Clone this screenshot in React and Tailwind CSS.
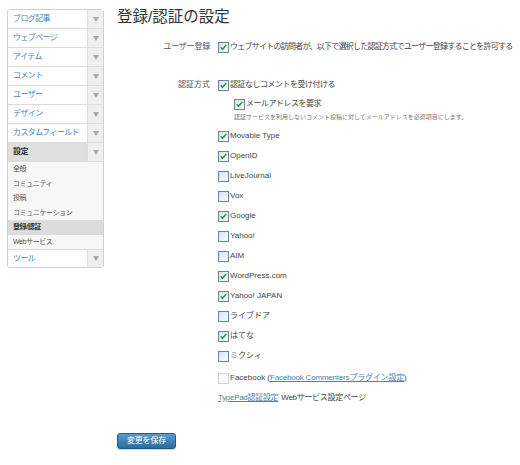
import React from 'react'

const font = { fontFamily: '"Liberation Sans", "Noto Sans CJK JP", sans-serif' }

function Box({ checked, disabled }) {
  return (
    <svg width="11" height="11" viewBox="0 0 11 11" className="shrink-0">
      <defs>
        <linearGradient id="cbg" x1="0" y1="0" x2="1" y2="1">
          <stop offset="0" stopColor="#d6e0ea" />
          <stop offset="1" stopColor="#ffffff" />
        </linearGradient>
      </defs>
      <rect x="0.5" y="0.5" width="10" height="10" fill={disabled ? '#fafafa' : 'url(#cbg)'} stroke={disabled ? '#d2d2d2' : '#6684aa'} />
      {checked && <path d="M2.7 5.3 L4.5 7.3 L8.3 3.1" fill="none" stroke="#22a022" strokeWidth="1.5" />}
    </svg>
  )
}

function Arrow() {
  return (
    <div className="w-[16px] flex items-center justify-center border-l border-[#dcdcdc] bg-[#efefef]">
      <svg width="6" height="5" viewBox="0 0 6 5"><path d="M0 0 H6 L3 5 Z" fill="#a8a8a8" /></svg>
    </div>
  )
}

function NavItem({ label, header }) {
  return (
    <div className={`flex h-[19px] border-b border-[#dcdcdc] ${header ? 'bg-[#dedede]' : 'bg-white'}`}>
      <div className={`flex-1 flex items-center pl-[5px] text-[8px] tracking-[-0.6px] ${header ? 'text-[#333] font-bold' : 'text-[#4a84b4]'}`}>{label}</div>
      <Arrow />
    </div>
  )
}

function SubItem({ label, active }) {
  return (
    <div className={`h-[14.5px] flex items-center pl-[5px] text-[7px] tracking-[-0.4px] ${active ? 'bg-[#dcdcdc] font-bold text-[#333]' : 'bg-[#f7f7f7] text-[#555]'}`}>{label}</div>
  )
}

function Option({ label, checked }) {
  return (
    <div className="h-[20px] flex items-center gap-[1px] text-[8px] text-[#444]">
      <Box checked={checked} />
      <span>{label}</span>
    </div>
  )
}

const services = [
  ['Movable Type', true],
  ['OpenID', true],
  ['LiveJournal', false],
  ['Vox', false],
  ['Google', true],
  ['Yahoo!', false],
  ['AIM', false],
  ['WordPress.com', true],
  ['Yahoo! JAPAN', true],
  ['ライブドア', false],
  ['はてな', true],
  ['ミクシィ', false],
]

export default function App() {
  return (
    <div className="w-[520px] h-[465px] bg-white flex" style={font}>
      <aside className="ml-[7px] mt-[9px] w-[97px] self-start border border-[#cfcfcf] rounded-[3px] overflow-hidden">
        <NavItem label="ブログ記事" />
        <NavItem label="ウェブページ" />
        <NavItem label="アイテム" />
        <NavItem label="コメント" />
        <NavItem label="ユーザー" />
        <NavItem label="デザイン" />
        <NavItem label="カスタムフィールド" />
        <NavItem label="設定" header />
        <SubItem label="全般" />
        <SubItem label="コミュニティ" />
        <SubItem label="投稿" />
        <SubItem label="コミュニケーション" />
        <SubItem label="登録/認証" active />
        <SubItem label="Webサービス" />
        <div className="flex h-[18px] bg-white border-t border-[#dcdcdc]">
          <div className="flex-1 flex items-center pl-[5px] text-[8px] tracking-[-0.6px] text-[#4a84b4]">ツール</div>
          <Arrow />
        </div>
      </aside>

      <main className="ml-[13px] flex-1">
        <h1 className="mt-[7px] h-[20px] leading-[20px] text-[15.5px] text-[#333]">登録/認証の設定</h1>

        <div className="mt-[10px] flex h-[20px] items-center">
          <div className="w-[93px] text-right text-[8px] text-[#555] tracking-[-0.2px]">ユーザー登録</div>
          <div className="ml-[8px] flex items-center gap-[1px] text-[8px] text-[#444] tracking-[-0.75px] whitespace-nowrap">
            <Box checked />
            <span>ウェブサイトの訪問者が、以下で選択した認証方式でユーザー登録することを許可する</span>
          </div>
        </div>

        <div className="mt-[18px] flex">
          <div className="w-[93px] h-[20px] flex items-center justify-end text-[8px] text-[#555]">認証方式</div>
          <div className="ml-[8px]">
            <div className="h-[20px] flex items-center gap-[1px] text-[8px] text-[#444] tracking-[-0.5px]">
              <Box checked />
              <span>認証なしコメントを受け付ける</span>
            </div>
            <div className="ml-[16px] mt-[1px] h-[16px] flex items-center gap-[1px] text-[8px] text-[#444] tracking-[-0.5px]">
              <Box checked />
              <span>メールアドレスを要求</span>
            </div>
            <div className="ml-[16px] h-[10px] leading-[10px] text-[6px] text-[#777] whitespace-nowrap">認証サービスを利用しないコメント投稿に対してメールアドレスを必須項目にします。</div>
            <div className="mt-[4px]">
              {services.map(([label, checked]) => (
                <Option key={label} label={label} checked={checked} />
              ))}
            </div>
            <div className="mt-[2px] h-[20px] flex items-center gap-[1px] text-[8px] text-[#444] whitespace-nowrap">
              <Box disabled />
              <span>
                Facebook (<a className="text-[#4a84b4] underline tracking-[-0.2px]">Facebook Commentersプラグイン設定</a>)
              </span>
            </div>
            <div className="h-[20px] flex items-center text-[8px] text-[#444] whitespace-nowrap tracking-[-0.3px]">
              <a className="text-[#4a84b4] underline">TypePad認証設定</a>
              <span className="ml-[3px]">Webサービス設定ページ</span>
            </div>
          </div>
        </div>

        <button className="mt-[25px] w-[59px] h-[16px] rounded-[3px] border border-[#1f5b86] bg-gradient-to-b from-[#5c9bcb] to-[#2b6c9e] text-white text-[8px] tracking-[-0.2px] flex items-center justify-center shadow-[0_1px_1px_rgba(0,0,0,0.2)]">
          変更を保存
        </button>
      </main>
    </div>
  )
}
